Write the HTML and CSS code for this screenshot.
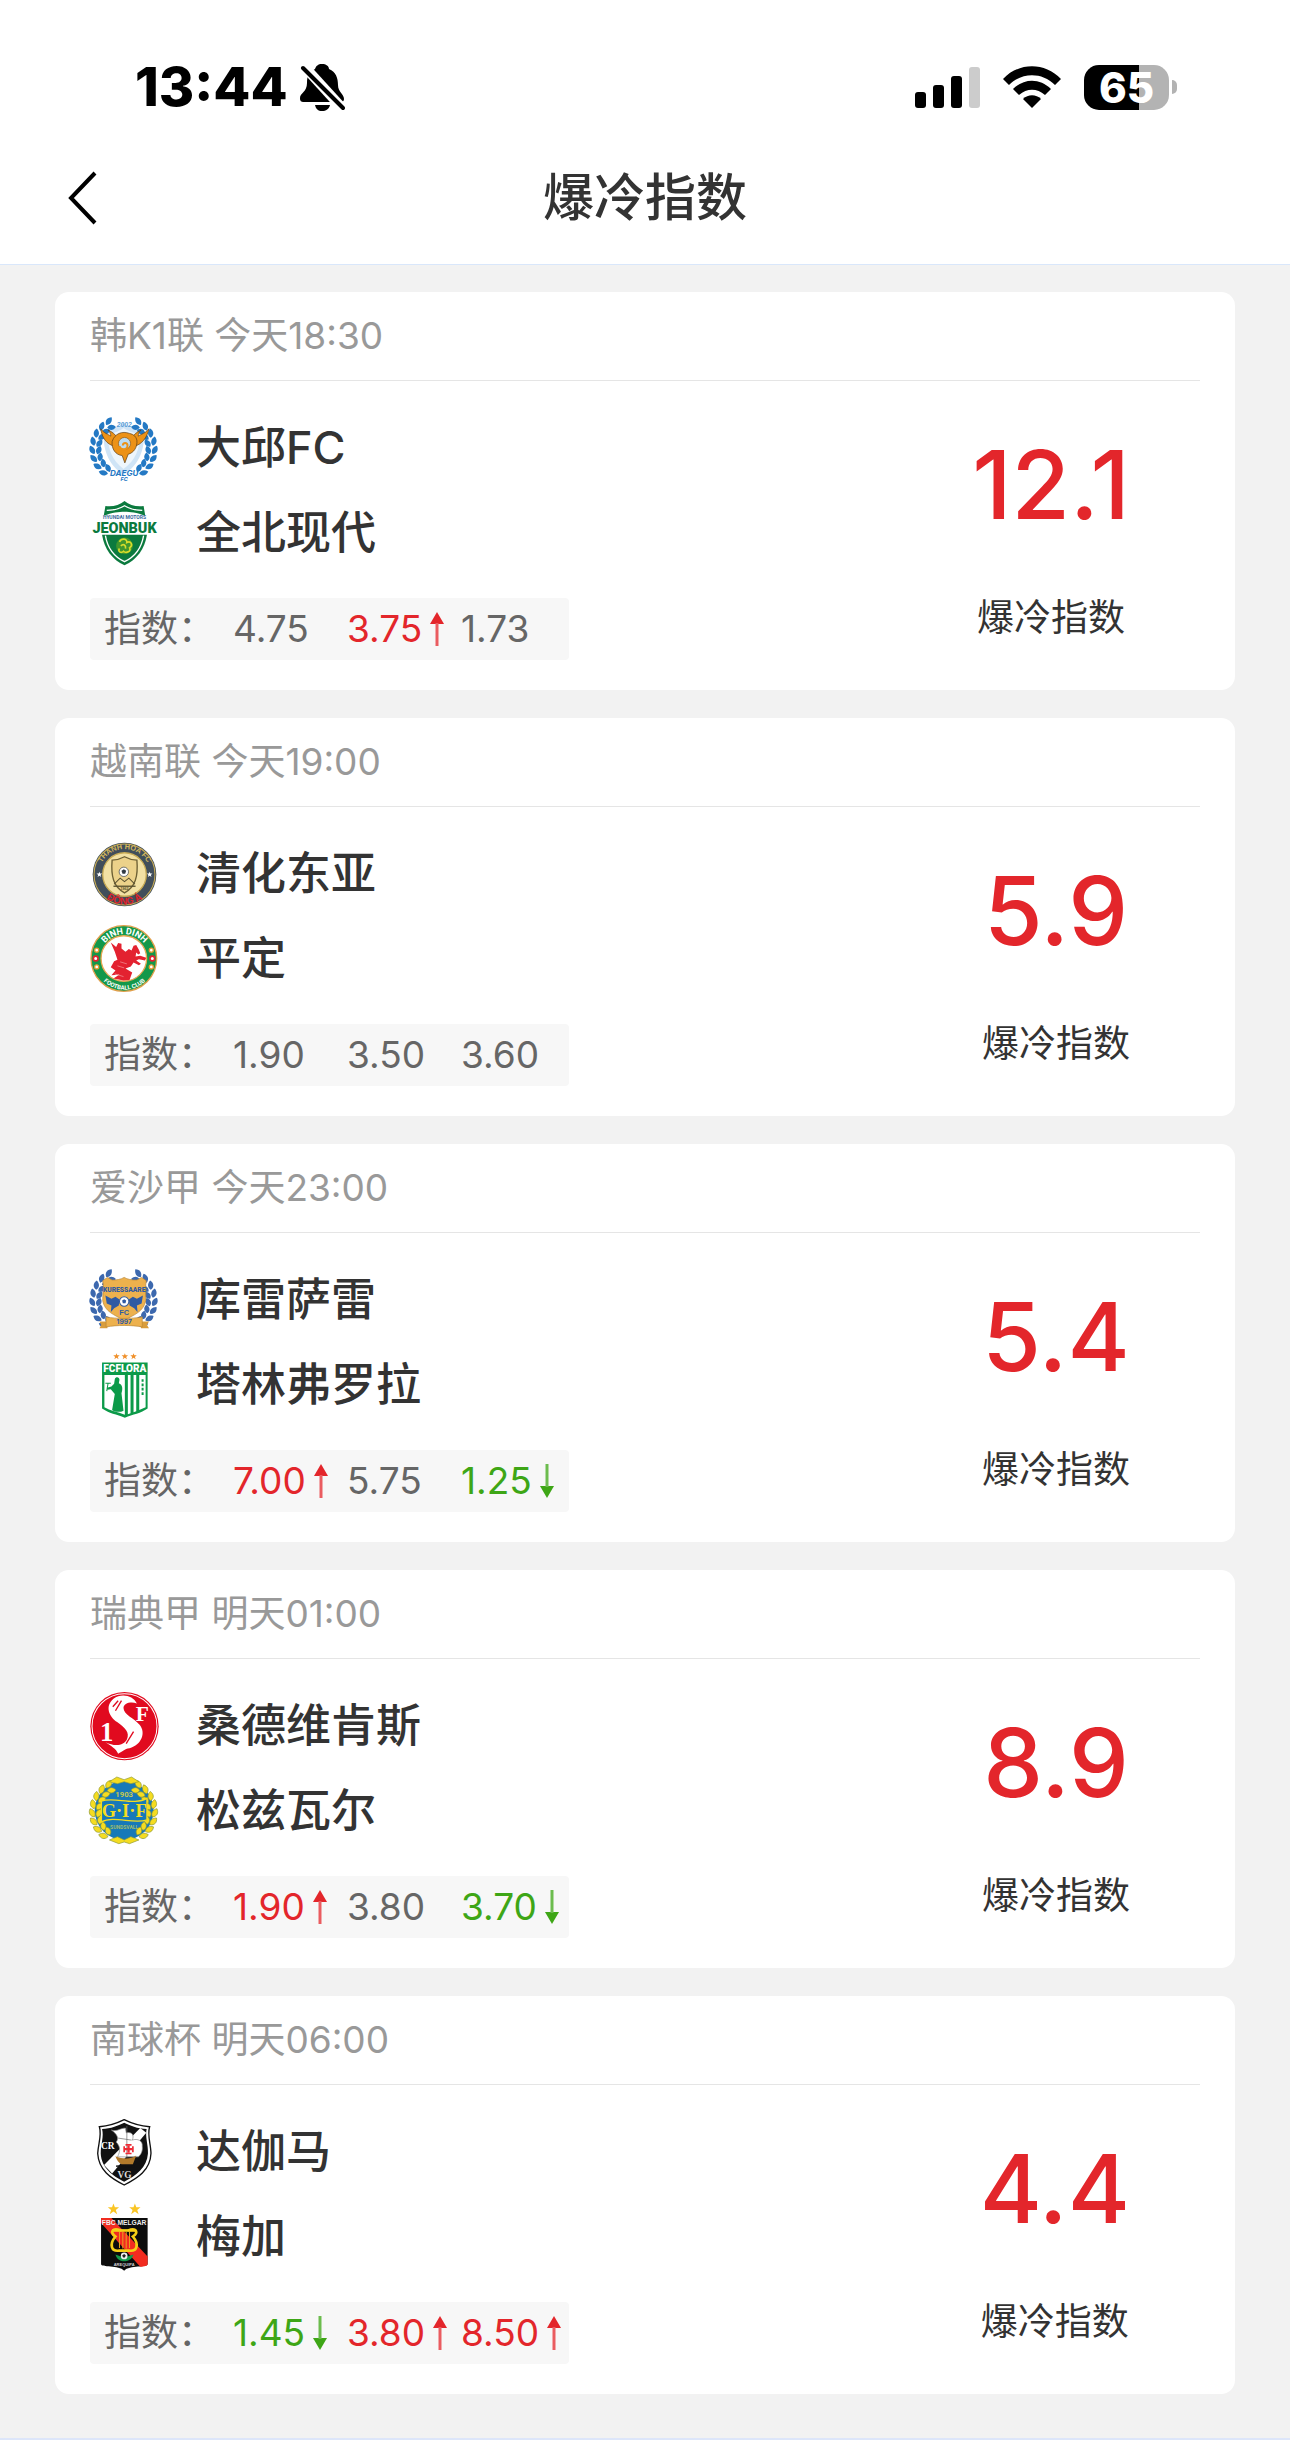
FILE: index.html
```
<!DOCTYPE html>
<html lang="zh-CN">
<head>
	<meta charset="UTF-8">
	<meta name="viewport" content="width=device-width, initial-scale=1">
	<title>爆冷指数</title>
	<link rel="stylesheet" href="styles.css">
</head>
<body>
	<!-- shared shapes -->
	<svg class="defs" width="0" height="0" aria-hidden="true">
		<symbol id="up" viewBox="0 0 14 34">
			<path d="M7 0L14 12H0z" fill="#e3262b"/>
			<path d="M7 11V34" stroke="#ea5c60" stroke-width="3"/>
		</symbol>
		<symbol id="down" viewBox="0 0 14 34">
			<path d="M7 34L14 22H0z" fill="#3ea616"/>
			<path d="M7 0V23" stroke="#6cbc4e" stroke-width="3"/>
		</symbol>
		<g id="twig">
			<path d="M0 0C-12 -7 -12 -19 -2 -28C9 -19 9 -7 0 0z" transform="translate(12 104) rotate(-14)"/>
			<path d="M0 0C-11 -6 -10 -18 0 -26C11 -18 10 -6 0 0z" transform="translate(20 106) rotate(32)"/>
		</g>
		<g id="sprig">
			<use href="#twig" transform="rotate(-58 100 104)"/>
			<use href="#twig" transform="rotate(-42 100 104)"/>
			<use href="#twig" transform="rotate(-26 100 104)"/>
			<use href="#twig" transform="rotate(-10 100 104)"/>
			<use href="#twig" transform="rotate(6 100 104)"/>
			<use href="#twig" transform="rotate(22 100 104)"/>
			<use href="#twig" transform="rotate(38 100 104)"/>
			<use href="#twig" transform="rotate(54 100 104)"/>
		</g>
		<g id="wreath">
			<use href="#sprig"/>
			<use href="#sprig" transform="translate(200 0) scale(-1 1)"/>
		</g>
		<path id="star" d="M0 -12L3 -4H12L5 2L8 11L0 5L-8 11L-5 2L-12 -4H-3z"/>
		<path id="arc-top" d="M27 103A76 76 0 0 1 179 103"/>
		<path id="arc-bottom" d="M13 103A90 90 0 0 0 193 103"/>
	</svg>

	<header class="header">
		<div class="status">
			<div class="status-left">
				<span class="time">13:44</span>
				<svg class="bell" viewBox="0 0 45 47">
					<path d="M22 0C26 0 29 2 29 5C36 8 38 14 38 21C38 28 44 30 44 35C44 37 43 38 40 38H4C1 38 0 37 0 34C0 29 7 28 7 19C7 12 9 8 15 5C16 2 18 0 22 0z"/>
					<path d="M15 41H30C29 45 26 47 22 47S16 45 15 41z"/>
					<path d="M1 -1L44 46" stroke="#fff" stroke-width="10"/>
					<path d="M3 4L43 44" stroke="#000" stroke-width="4" stroke-linecap="round"/>
				</svg>
			</div>
			<div class="status-right">
				<svg class="signal" viewBox="0 0 65 41">
					<rect y="25" width="11" height="16" rx="3"/>
					<rect x="18" y="18" width="11" height="23" rx="3"/>
					<rect x="36" y="9" width="11" height="32" rx="3"/>
					<rect x="54" width="11" height="41" rx="3" fill="#ccc"/>
				</svg>
				<svg class="wifi" viewBox="0 0 58 42">
					<path d="M0 13C16 -4 42 -4 58 13L52 19C39 6 19 6 6 19z"/>
					<path d="M10 23C21 12 37 12 48 23L42 29C34 22 24 22 16 29z"/>
					<path d="M20 33C25 28 33 28 38 33L29 42z"/>
				</svg>
				<div class="battery">
					<span class="battery-level">65</span>
					<span class="battery-tip"></span>
				</div>
			</div>
		</div>
		<div class="nav">
			<button type="button" class="back" aria-label="返回">
				<svg viewBox="0 0 30 54"><path d="M27 2L3 27L27 52" fill="none" stroke="#000" stroke-width="4"/></svg>
			</button>
			<h1>爆冷指数</h1>
		</div>
	</header>

	<main class="list">
		<section class="card">
			<h2 class="match">韩K1联 今天18:30</h2>
			<div class="card-body">
				<div class="teams">
					<div class="team">
						<svg class="logo" viewBox="0 0 200 200">
							<path d="M42 45C62 50 82 40 100 26C118 40 138 50 160 45C166 100 150 150 100 182C52 150 36 100 42 45z" fill="#cfe4f6"/>
							<path d="M54 58C72 60 88 50 100 42C114 50 130 60 148 58C150 104 136 138 100 164C66 138 52 104 54 58z" fill="#eef6fc"/>
							<use href="#wreath" fill="#2479c4"/>
							<text x="102" y="38" class="logo-text" font-size="20" font-style="italic" fill="#5b9ed6">2002</text>
							<g fill="#ec9217" stroke="#5a3a14" stroke-width="2">
								<path d="M72 96C50 90 36 72 32 44C42 58 54 60 62 66C62 60 60 54 54 48C72 56 78 66 84 72z"/>
								<path d="M134 96C154 90 170 72 176 44C166 58 152 60 144 66C144 60 146 54 152 48C136 56 128 66 122 72z"/>
								<path d="M66 82C74 58 96 50 118 58C130 60 138 68 140 78C142 100 130 116 114 120L104 146L96 124C76 122 64 104 66 82z"/>
							</g>
							<circle cx="103" cy="88" r="18" fill="#bcdcf2" stroke="#8a5514" stroke-width="2"/>
							<path d="M88 96C92 110 112 108 112 94C112 84 98 84 98 94" fill="none" stroke="#ec9217" stroke-width="6"/>
							<text x="102" y="186" class="logo-text wide" font-size="24" font-style="italic" fill="#2479c4">DAEGU</text>
							<text x="102" y="199" class="logo-text wide" font-size="16" font-style="italic" fill="#2479c4">FC</text>
						</svg>
						<span>大邱FC</span>
					</div>
					<div class="team">
						<svg class="logo" viewBox="0 0 200 200">
							<path d="M103 6C118 18 138 24 160 21L165 50C140 40 120 38 103 38S66 40 41 50L46 21C68 24 88 18 103 6z" fill="#0b7a3e"/>
							<path d="M50 34C72 34 90 28 103 20C116 28 134 34 156 34" fill="none" stroke="#fff" stroke-width="4"/>
							<text x="103" y="60" class="logo-text narrow" font-size="15" fill="#39679b">HYUNDAI MOTORS</text>
							<text x="103" y="102" class="logo-text narrow heavy" font-size="43" fill="#0b7a3e">JEONBUK</text>
							<path d="M36 107H170C164 148 140 182 103 198C66 182 42 148 36 107z" fill="#0b7a3e"/>
							<path d="M46 109C52 145 72 172 103 187C134 172 154 145 160 109" fill="none" stroke="#fff" stroke-width="4"/>
							<circle cx="103" cy="140" r="25" fill="#3f962d"/>
							<path d="M88 128C94 116 112 118 110 130C122 124 130 138 118 146C124 156 108 164 100 156C92 164 82 156 88 148M92 140C100 132 108 138 106 148" fill="none" stroke="#d7dc2b" stroke-width="5"/>
						</svg>
						<span>全北现代</span>
					</div>
				</div>
				<div class="odds">
					<span>指数：</span>
					<span>4.75</span>
					<span class="rise">3.75<svg class="arrow"><use href="#up"/></svg></span>
					<span>1.73</span>
				</div>
				<div class="upset">
					<strong>12.1</strong>
					<span>爆冷指数</span>
				</div>
			</div>
		</section>

		<section class="card">
			<h2 class="match">越南联 今天19:00</h2>
			<div class="card-body">
				<div class="teams">
					<div class="team">
						<svg class="logo" viewBox="0 0 200 200">
							<circle cx="103" cy="103" r="95" fill="#414e5a"/>
							<circle cx="103" cy="103" r="91" fill="none" stroke="#c9ac55" stroke-width="3"/>
							<circle cx="103" cy="103" r="65" fill="#f2e1a4" stroke="#c9ac55" stroke-width="4"/>
							<path d="M66 60C80 60 92 56 103 50C114 56 126 60 140 60C144 108 136 140 103 158C70 140 62 108 66 60z" fill="#ecd28a" stroke="#6d6034" stroke-width="4"/>
							<path d="M72 132L90 114L103 124L116 114L134 132" fill="none" stroke="#5a5230" stroke-width="3"/>
							<path d="M70 138H136" stroke="#5a5230" stroke-width="4"/>
							<circle cx="101" cy="95" r="14" fill="#fff" stroke="#313a44" stroke-width="2"/>
							<path d="M101 87L108 92L105 101H97L94 92z" fill="#313a44"/>
							<text x="103" y="150" class="logo-text" font-size="11" fill="#5a5230">1962</text>
							<use href="#star" transform="translate(28 103) scale(.7)" fill="#fff"/>
							<use href="#star" transform="translate(178 103) scale(.7)" fill="#fff"/>
							<text class="logo-text" font-size="22" fill="#d5b85e"><textPath href="#arc-top" startOffset="50%">THANH HÓA FC</textPath></text>
							<text class="logo-text wide" font-size="29" fill="#d8232b"><textPath href="#arc-bottom" startOffset="50%">ĐÔNG Á</textPath></text>
						</svg>
						<span>清化东亚</span>
					</div>
					<div class="team">
						<svg class="logo" viewBox="0 0 200 200">
							<circle cx="101" cy="100" r="98" fill="#13984a" stroke="#e0a04c" stroke-width="4"/>
							<circle cx="101" cy="100" r="68" fill="#fff" stroke="#e8a853" stroke-width="4"/>
							<path d="M62 52L78 66L84 54L94 56L94 70L106 80L116 72L124 76L130 62L138 60L146 74L150 84L144 88L138 82L136 94L150 92L168 98L164 106L146 102L138 106L152 116L146 120L130 112L122 124L106 130L126 142L118 164L100 166L70 160L88 148L64 150L76 136L62 126L72 108L82 104L74 80z" fill="#e32230"/>
							<path d="M82 122L102 128M90 110L110 116M74 146L100 154" stroke="#f39a9e" stroke-width="2"/>
							<g fill="#fff" stroke="#e79b32" stroke-width="4">
								<circle cx="20" cy="75" r="6"/><circle cx="183" cy="75" r="6"/>
								<circle cx="20" cy="125" r="6"/><circle cx="183" cy="125" r="6"/>
							</g>
							<g fill="#fff" stroke="#e32230" stroke-width="5">
								<circle cx="17" cy="100" r="7"/><circle cx="186" cy="100" r="7"/>
							</g>
							<text class="logo-text narrow" font-size="27" fill="#fff"><textPath href="#arc-top" startOffset="50%">BINH DINH</textPath></text>
							<text class="logo-text narrow" font-size="18" fill="#fff"><textPath href="#arc-bottom" startOffset="50%">FOOTBALL CLUB</textPath></text>
						</svg>
						<span>平定</span>
					</div>
				</div>
				<div class="odds">
					<span>指数：</span>
					<span>1.90</span>
					<span>3.50</span>
					<span>3.60</span>
				</div>
				<div class="upset">
					<strong>5.9</strong>
					<span>爆冷指数</span>
				</div>
			</div>
		</section>

		<section class="card">
			<h2 class="match">爱沙甲 今天23:00</h2>
			<div class="card-body">
				<div class="teams">
					<div class="team">
						<svg class="logo" viewBox="0 0 200 200">
							<use href="#wreath" fill="#3c68ae"/>
							<path d="M38 44L52 34L66 42C80 42 92 40 102 34C112 40 124 42 140 42L154 34L168 44C164 60 168 80 166 104C160 136 132 146 102 162C72 146 44 136 38 104C38 80 42 60 38 44z" fill="#edb14d" stroke="#b98534" stroke-width="2"/>
							<text x="102" y="78" class="logo-text narrow heavy" font-size="20" fill="#2f5aa3">KURESSAARE</text>
							<path d="M46 88L64 98L76 92L88 100L86 118L72 126L62 138L64 118L50 112zM158 88L140 98L128 92L116 100L118 118L132 126L142 138L140 118L154 112z" fill="#2f5aa3"/>
							<circle cx="102" cy="106" r="14" fill="#fff" stroke="#2f5aa3" stroke-width="3"/>
							<path d="M102 99L108 103L106 111H98L96 103z" fill="#2f5aa3"/>
							<text x="102" y="146" class="logo-text" font-size="22" fill="#2f5aa3">FC</text>
							<path d="M28 166H52V186H28L34 176zM176 166H152V186H176L170 176z" fill="#d99d3c"/>
							<path d="M48 152C80 158 124 158 156 152V182C124 176 80 176 48 182z" fill="#edb14d" stroke="#b98534" stroke-width="2"/>
							<text x="102" y="174" class="logo-text wide" font-size="20" fill="#2f5aa3">1997</text>
						</svg>
						<span>库雷萨雷</span>
					</div>
					<div class="team">
						<svg class="logo" viewBox="0 0 200 200">
							<g fill="#f0902a">
								<use href="#star" transform="translate(79 16) scale(.8)"/>
								<use href="#star" transform="translate(104 16) scale(.8)"/>
								<use href="#star" transform="translate(130 16) scale(.8)"/>
							</g>
							<path d="M36 34H172V172C152 186 128 190 104 199C80 190 56 186 36 172z" fill="#0c9a49"/>
							<path d="M43 72H104V190C82 182 60 178 43 168z" fill="#fff"/>
							<path d="M113 72H121V186L113 189zM130 72H138V180L130 183zM147 72H166V168L147 176z" fill="#fff"/>
							<text x="104" y="64" class="logo-text narrow heavy" font-size="30" fill="#fff">FCFLORA</text>
							<path d="M74 84C76 76 88 76 88 86L86 96C98 100 98 114 94 126L100 178C90 184 72 182 66 176L74 128L62 114L52 116L50 110L64 106L72 98z" fill="#0c9a49"/>
							<path d="M46 96H62M54 96L50 120" stroke="#0c9a49" stroke-width="3"/>
							<path d="M157 84V132" stroke="#0c9a49" stroke-width="6" stroke-dasharray="8 5"/>
						</svg>
						<span>塔林弗罗拉</span>
					</div>
				</div>
				<div class="odds">
					<span>指数：</span>
					<span class="rise">7.00<svg class="arrow"><use href="#up"/></svg></span>
					<span>5.75</span>
					<span class="fall">1.25<svg class="arrow"><use href="#down"/></svg></span>
				</div>
				<div class="upset">
					<strong>5.4</strong>
					<span>爆冷指数</span>
				</div>
			</div>
		</section>

		<section class="card">
			<h2 class="match">瑞典甲 明天01:00</h2>
			<div class="card-body">
				<div class="teams">
					<div class="team">
						<svg class="logo" viewBox="0 0 200 200">
							<circle cx="103" cy="102" r="102" fill="#e10a1f"/>
							<circle cx="103" cy="102" r="97" fill="none" stroke="#fff" stroke-width="3"/>
							<path d="M140 34C128 10 94 2 70 20C44 42 56 74 82 90C104 106 120 120 110 142C102 160 74 164 46 150C62 160 78 170 84 184C98 178 102 170 118 168C154 158 168 122 148 98C132 78 100 68 100 48C100 34 120 28 140 34z" fill="#fff"/>
							<path d="M94 26L76 56M84 26L68 44M130 118L108 154" stroke="#e10a1f" stroke-width="4"/>
							<text x="50" y="146" class="logo-text serif" font-size="80" fill="#fff">1</text>
							<text x="156" y="88" class="logo-text serif" font-size="64" fill="#fff">F</text>
						</svg>
						<span>桑德维肯斯</span>
					</div>
					<div class="team">
						<svg class="logo" viewBox="0 0 200 200">
							<circle cx="102" cy="100" r="88" fill="#1779b8"/>
							<g fill="#f5dc20" stroke="#8f9a35" stroke-width="2">
								<use href="#wreath"/>
								<path d="M102 8L80 0L58 14L82 20L102 14L122 20L146 14L124 0z"/>
								<path d="M102 188L82 178L58 188L86 199L102 194L118 199L146 188L122 178z"/>
							</g>
							<path d="M34 72C70 58 132 86 170 64V128C132 142 70 114 34 134z" fill="#1779b8" stroke="#f5dc20" stroke-width="4"/>
							<text x="102" y="59" class="logo-text narrow" font-size="23" fill="#c6c84c">1903</text>
							<text x="102" y="119" class="logo-text serif" font-size="55" fill="#f5dc20">G·I·F</text>
							<text x="102" y="154" class="logo-text narrow" font-size="15" fill="#9fbd6b">SUNDSVALL</text>
						</svg>
						<span>松兹瓦尔</span>
					</div>
				</div>
				<div class="odds">
					<span>指数：</span>
					<span class="rise">1.90<svg class="arrow"><use href="#up"/></svg></span>
					<span>3.80</span>
					<span class="fall">3.70<svg class="arrow"><use href="#down"/></svg></span>
				</div>
				<div class="upset">
					<strong>8.9</strong>
					<span>爆冷指数</span>
				</div>
			</div>
		</section>

		<section class="card">
			<h2 class="match">南球杯 明天06:00</h2>
			<div class="card-body">
				<div class="teams">
					<div class="team">
						<svg class="logo" viewBox="0 0 200 200">
							<path d="M28 26C56 24 84 14 102 5C120 14 148 24 178 26C170 52 182 78 182 106C180 156 142 180 102 200C62 180 26 156 23 106C24 78 36 52 28 26z" fill="#fff" stroke="#111" stroke-width="4"/>
							<path d="M36 33C62 32 86 22 102 14C118 22 142 32 169 33C164 56 174 80 173 106C170 148 138 172 102 190C66 172 34 148 32 106C32 80 42 56 36 33z" fill="#111"/>
							<path d="M150 30L168 44L66 166L42 140z" fill="#fff"/>
							<path d="M64 36C80 42 90 30 106 30L108 44C128 40 132 54 126 66C142 60 158 68 156 84C158 98 152 110 144 116H82C92 98 90 84 78 72C88 60 80 48 64 36z" fill="#fff" stroke="#888" stroke-width="2"/>
							<path d="M110 24V118M84 60L124 66" stroke="#666" stroke-width="2"/>
							<path d="M76 114C100 124 124 122 138 112L128 138H94C86 134 80 126 76 114z" fill="#b27a2b"/>
							<path d="M78 144C98 138 108 152 132 144" fill="none" stroke="#111" stroke-width="4"/>
							<path d="M115 82V104M104 93H126" stroke="#ed2b35" stroke-width="7"/>
							<path d="M106 80H124M106 106H124M102 84V102M128 84V102" stroke="#ed2b35" stroke-width="5"/>
							<text x="53" y="94" class="logo-text serif" font-size="28" fill="#fff">CR</text>
							<text x="103" y="178" class="logo-text serif" font-size="28" fill="#ddd">VG</text>
						</svg>
						<span>达伽马</span>
					</div>
					<div class="team">
						<svg class="logo" viewBox="0 0 200 200">
							<g fill="#fac524">
								<use href="#star" transform="translate(70 18) scale(1.4)"/>
								<use href="#star" transform="translate(134 18) scale(1.4)"/>
							</g>
							<path d="M33 45H172V182C172 194 118 184 102 202C86 184 33 194 33 182z" fill="#0c0c0c"/>
							<path d="M33 60V45H64L172 160V182C172 188 162 190 150 190z" fill="#f22c20"/>
							<text x="102" y="66" class="logo-text" font-size="20" fill="#eee">FBC MELGAR</text>
							<g fill="none" stroke="#f6cf16" stroke-width="8">
								<path d="M92 82C66 72 58 88 76 100C56 124 64 146 88 142H116C140 146 148 124 128 100C146 88 138 72 114 82"/>
								<path d="M66 82H138"/>
							</g>
							<path d="M88 86V134M98 86V136M108 86V136M118 86V134" stroke="#e9a321" stroke-width="3"/>
							<path d="M76 154C80 170 92 174 102 174C112 174 126 170 130 154L116 158L102 164L88 158z" fill="#139a4a"/>
							<circle cx="102" cy="158" r="10" fill="#eee"/>
							<path d="M102 152L107 157L104 163H99L96 157z" fill="#222"/>
							<text x="102" y="187" class="logo-text" font-size="12" fill="#ccc">AREQUIPA</text>
						</svg>
						<span>梅加</span>
					</div>
				</div>
				<div class="odds">
					<span>指数：</span>
					<span class="fall">1.45<svg class="arrow"><use href="#down"/></svg></span>
					<span class="rise">3.80<svg class="arrow"><use href="#up"/></svg></span>
					<span class="rise">8.50<svg class="arrow"><use href="#up"/></svg></span>
				</div>
				<div class="upset">
					<strong>4.4</strong>
					<span>爆冷指数</span>
				</div>
			</div>
		</section>
	</main>
</body>
</html>
```
FILE: styles.css
```
* {
	box-sizing: border-box;
}
body {
	margin: 0;
	font-family: Inter, "Noto Sans CJK SC", sans-serif;
	background-color: #f2f2f2;
	color: #333;
}
.defs {
	position: absolute;
}

/* status bar + title */
.header {
	background-color: #fff;
	border-bottom: 1px solid #d9e7fb;
}
.status {
	display: flex;
	justify-content: space-between;
	align-items: center;
	height: 130px;
	padding: 44px 113px 0 135px;
	color: #000;
}
.status-left,
.status-right {
	display: flex;
	align-items: center;
}
.status-left {
	gap: 12px;
}
.status-right {
	gap: 23px;
}
.time {
	font-size: 54px;
	font-weight: 800;
	line-height: 60px;
}
.bell {
	width: 45px;
	height: 47px;
}
.signal {
	width: 65px;
	height: 41px;
}
.wifi {
	width: 58px;
	height: 42px;
}
.battery {
	display: flex;
	align-items: center;
	gap: 3px;
}
.battery-level {
	width: 85px;
	border-radius: 15px;
	background: linear-gradient(to right, #000 65%, #b3b3b3 65%);
	color: #fff;
	font-size: 42px;
	font-weight: 800;
	line-height: 45px;
	text-align: center;
}
.battery-tip {
	width: 5px;
	height: 14px;
	border-radius: 0 5px 5px 0;
	background-color: #b3b3b3;
}
.nav {
	display: grid;
	grid-template-columns: 1fr auto 1fr;
	align-items: center;
	height: 134px;
	padding: 2px 68px 0;
}
.nav h1 {
	margin: 0;
	font-size: 51px;
	font-weight: 500;
	line-height: 60px;
}
.back {
	justify-self: start;
	padding: 0;
	border: none;
	background: none;
	cursor: pointer;
}
.back svg {
	display: block;
	width: 30px;
	height: 54px;
}

/* match cards */
.list {
	display: flex;
	flex-direction: column;
	gap: 28px;
	padding: 27px 55px 44px;
	border-bottom: 2px solid #dde6fa;
}
.card {
	padding: 0 35px 30px;
	border-radius: 14px;
	background-color: #fff;
}
.match {
	margin: 0;
	border-bottom: 1px solid #e5e5e5;
	color: #999;
	font-size: 37px;
	font-weight: 400;
	line-height: 88px;
}
.card-body {
	display: grid;
	grid-template-columns: 1fr auto;
	padding-top: 24px;
}
.team {
	display: flex;
	align-items: center;
	gap: 39px;
	height: 85px;
	font-size: 45px;
	font-weight: 500;
	line-height: 60px;
}
.logo {
	width: 67px;
	height: 67px;
	overflow: visible;
}
.logo-text {
	font-family: "Liberation Sans", sans-serif;
	font-weight: 700;
	text-anchor: middle;
}
.narrow {
	font-family: Roboto, sans-serif;
}
.heavy {
	font-weight: 900;
}
.wide {
	font-family: Inter, sans-serif;
}
.serif {
	font-family: "Liberation Serif", serif;
}
.odds {
	display: grid;
	grid-template-columns: 129px 114px 114px 108px;
	justify-self: start;
	margin-top: 23px;
	padding-left: 14px;
	border-radius: 4px;
	background-color: #f7f7f7;
	color: #666;
	font-size: 37px;
	line-height: 62px;
	white-space: nowrap;
}
.odds span {
	display: flex;
	align-items: center;
}
.odds .rise {
	color: #e3262b;
}
.odds .fall {
	color: #3ea616;
}
.arrow {
	flex: none;
	width: 14px;
	height: 34px;
	margin-left: 8px;
}
.upset {
	grid-column: 2;
	grid-row: 1 / 3;
	display: flex;
	flex-direction: column;
	align-items: center;
	gap: 23px;
	margin-right: 70px;
	font-size: 37px;
	line-height: 60px;
}
.upset strong {
	color: #e3262b;
	font-size: 95px;
	font-weight: 500;
	line-height: 160px;
}
```
